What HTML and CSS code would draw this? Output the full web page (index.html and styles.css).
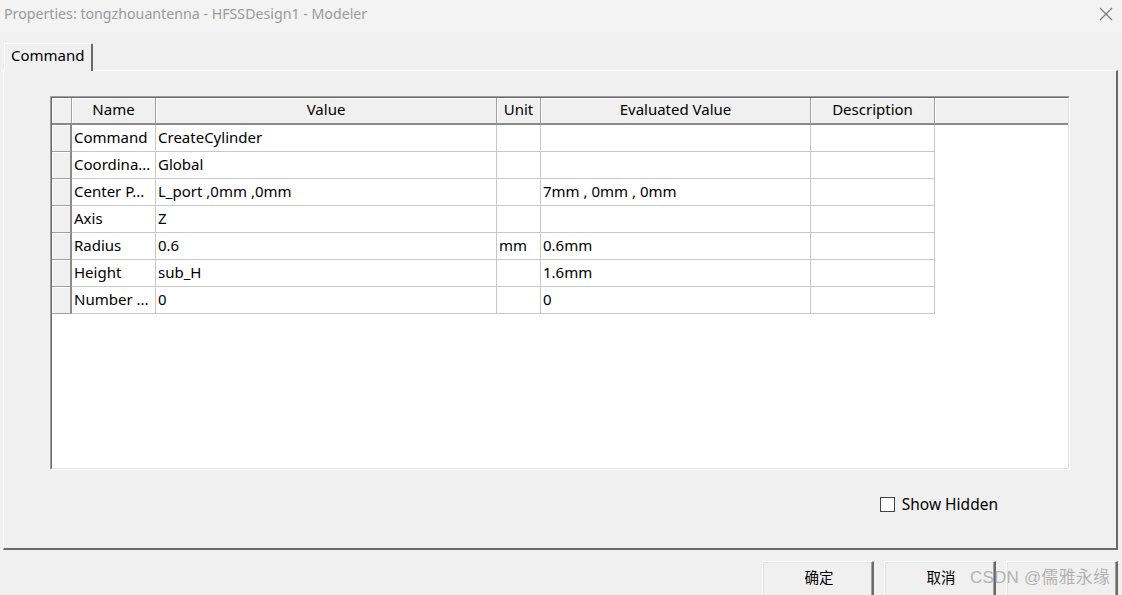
FILE: index.html
```html
<!DOCTYPE html>
<html>
<head>
<meta charset="utf-8">
<link rel="stylesheet" href="styles.css">
</head>
<body>
<div class="window">
  <div class="titlebar">
    <span class="title">Properties: tongzhouantenna - HFSSDesign1 - Modeler</span>
    <svg class="close" width="14" height="14" viewBox="0 0 14 14"><path d="M1 1 L13 13 M13 1 L1 13" stroke="#7a7a7a" stroke-width="1.2" fill="none"/></svg>
  </div>
  <div class="tabs">
    <div class="tab">Command</div>
  </div>
  <div class="panel">
    <div class="grid-outer">
      <div class="grid-inner">
        <table class="grid">
          <colgroup>
            <col class="c-rh"><col class="c-name"><col class="c-value"><col class="c-unit"><col class="c-eval"><col class="c-desc"><col>
          </colgroup>
          <thead>
            <tr>
              <th class="rh"></th><th>Name</th><th>Value</th><th>Unit</th><th>Evaluated Value</th><th>Description</th><th class="fill"></th>
            </tr>
          </thead>
          <tbody>
            <tr><td class="rh"></td><td>Command</td><td>CreateCylinder</td><td></td><td></td><td></td><td class="fill"></td></tr>
            <tr><td class="rh"></td><td>Coordina...</td><td>Global</td><td></td><td></td><td></td><td class="fill"></td></tr>
            <tr><td class="rh"></td><td>Center P...</td><td>L_port ,0mm ,0mm</td><td></td><td>7mm , 0mm , 0mm</td><td></td><td class="fill"></td></tr>
            <tr><td class="rh"></td><td>Axis</td><td>Z</td><td></td><td></td><td></td><td class="fill"></td></tr>
            <tr><td class="rh"></td><td>Radius</td><td>0.6</td><td>mm</td><td>0.6mm</td><td></td><td class="fill"></td></tr>
            <tr><td class="rh"></td><td>Height</td><td>sub_H</td><td></td><td>1.6mm</td><td></td><td class="fill"></td></tr>
            <tr><td class="rh"></td><td>Number ...</td><td>0</td><td></td><td>0</td><td></td><td class="fill"></td></tr>
          </tbody>
        </table>
      </div>
    </div>
    <div class="options">
      <label class="check"><span class="box"></span><span>Show Hidden</span></label>
    </div>
  </div>
  <div class="buttons">
    <div class="btn">确定</div>
    <div class="btn">取消</div>
    <div class="btn"></div>
  </div>
  <div class="watermark">CSDN @儒雅永缘</div>
</div>
</body>
</html>
```
FILE: styles.css
```css
html, body {
  margin: 0;
  padding: 0;
  background: #f0f0f0;
  overflow: hidden;
}
.window {
  position: relative;
  width: 1122px;
  height: 595px;
  overflow: hidden;
  font-family: "Noto Sans", "Noto Sans CJK SC", sans-serif;
  font-size: 15px;
  color: #000;
}
.titlebar {
  height: 32px;
  background: #f3f3f3;
  display: flex;
  align-items: center;
  justify-content: space-between;
  padding: 0 9px 0 4px;
}
.title {
  color: #9a9a9a;
  font-size: 14.2px;
  margin-top: -5px;
}
.close {
  margin-top: -4px;
}
.tabs {
  display: flex;
  padding: 11px 0 0 4px;
  height: 27px;
  box-sizing: content-box;
}
.tab {
  width: 89px;
  box-sizing: border-box;
  height: 28px;
  border-left: 1px solid #fff;
  border-top: 1px solid #fff;
  border-right: 2px solid #696969;
  border-top-right-radius: 2px;
  padding: 1px 0 0 6px;
  background: #f0f0f0;
  position: relative;
  z-index: 1;
}
.panel {
  margin-left: 3px;
  width: 1115px;
  height: 480px;
  box-sizing: border-box;
  border-top: 1px solid #fff;
  border-left: 1px solid #fff;
  border-right: 2px solid #6a6a6a;
  border-bottom: 2px solid #6a6a6a;
  padding: 25px 0 0 46px;
}
.grid-outer {
  width: 1020px;
  height: 374px;
  box-sizing: border-box;
  border-top: 1px solid #a0a0a0;
  border-left: 1px solid #a0a0a0;
  border-right: 1px solid #fff;
  border-bottom: 1px solid #fff;
}
.grid-inner {
  height: 100%;
  box-sizing: border-box;
  border-top: 1px solid #696969;
  border-left: 1px solid #696969;
  border-right: 1px solid #e3e3e3;
  border-bottom: 1px solid #e3e3e3;
  background: #fff;
}
.grid {
  width: 100%;
  table-layout: fixed;
  border-collapse: separate;
  border-spacing: 0;
}
.c-rh { width: 20px; }
.c-name { width: 84px; }
.c-value { width: 341px; }
.c-unit { width: 44px; }
.c-eval { width: 270px; }
.c-desc { width: 124px; }
.grid th {
  height: 27px;
  box-sizing: border-box;
  background: #f0f0f0;
  font-weight: normal;
  text-align: center;
  padding: 0 0 4px 0;
  border-right: 1px solid #a0a0a0;
  border-bottom: 2px solid #8a8a8a;
  box-shadow: inset 1px 1px 0 #fff;
  white-space: nowrap;
  overflow: hidden;
}
.grid th.fill {
  border-right: none;
}
.grid td {
  height: 27px;
  box-sizing: border-box;
  padding: 0 0 3px 2px;
  border-right: 1px solid #c8c8c8;
  border-bottom: 1px solid #c8c8c8;
  white-space: nowrap;
  overflow: hidden;
}
.grid td.rh {
  background: #f0f0f0;
  border-right: 2px solid #8a8a8a;
  border-bottom: 1px solid #a0a0a0;
  box-shadow: inset 1px 1px 0 #fff;
  padding: 0;
}
.grid td.fill {
  border: none;
}
.options {
  display: flex;
  justify-content: flex-end;
  padding: 23px 118px 0 0;
}
.check {
  display: flex;
  align-items: center;
  gap: 7px;
  font-size: 15.5px;
}
.box {
  width: 13px;
  height: 13px;
  border: 1px solid #444;
  background: #fff;
}
.buttons {
  display: flex;
  justify-content: flex-end;
  gap: 10px;
  padding: 11px 4px 0 0;
}
.btn {
  width: 112px;
  height: 40px;
  box-sizing: border-box;
  border-top: 1px solid #fff;
  border-left: 1px solid #fff;
  border-right: 2px solid #6a6a6a;
  border-bottom: 2px solid #6a6a6a;
  background: #f0f0f0;
  box-shadow: inset -1px -1px 0 #a0a0a0, inset 1px 1px 0 #e3e3e3;
  text-align: center;
  padding: 4px 0 0 3px;
  font-family: "Noto Sans CJK SC", sans-serif;
  font-size: 14.5px;
}
.watermark {
  position: absolute;
  left: 970px;
  top: 563px;
  font-family: "Liberation Sans", "Noto Sans CJK SC", sans-serif;
  font-size: 17px;
  color: rgba(150, 150, 150, 0.7);
  letter-spacing: 0.2px;
}
```
